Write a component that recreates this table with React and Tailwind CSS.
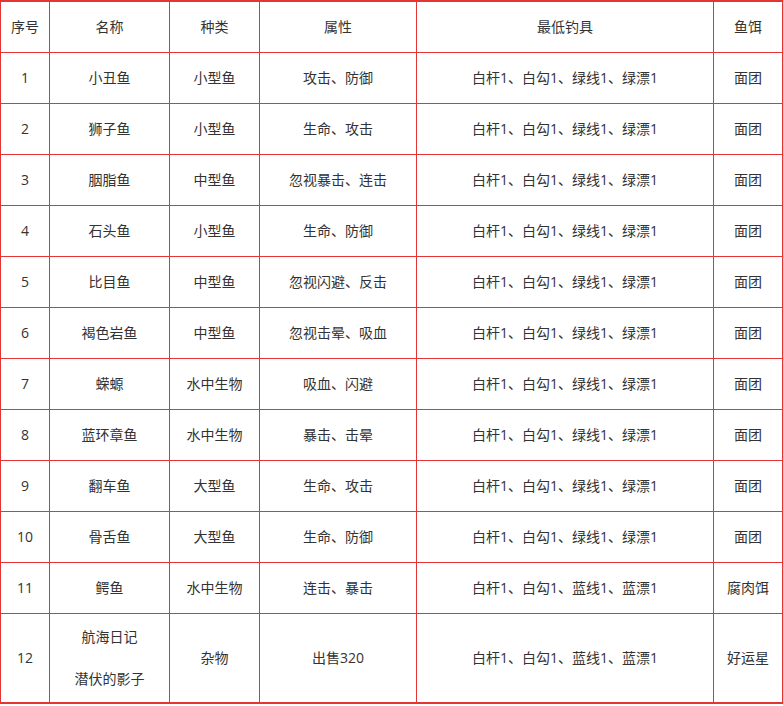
import React from "react";

const ROWS = [
  ["1", "小丑鱼", "小型鱼", "攻击、防御", "白杆1、白勾1、绿线1、绿漂1", "面团"],
  ["2", "狮子鱼", "小型鱼", "生命、攻击", "白杆1、白勾1、绿线1、绿漂1", "面团"],
  ["3", "胭脂鱼", "中型鱼", "忽视暴击、连击", "白杆1、白勾1、绿线1、绿漂1", "面团"],
  ["4", "石头鱼", "小型鱼", "生命、防御", "白杆1、白勾1、绿线1、绿漂1", "面团"],
  ["5", "比目鱼", "中型鱼", "忽视闪避、反击", "白杆1、白勾1、绿线1、绿漂1", "面团"],
  ["6", "褐色岩鱼", "中型鱼", "忽视击晕、吸血", "白杆1、白勾1、绿线1、绿漂1", "面团"],
  ["7", "蝾螈", "水中生物", "吸血、闪避", "白杆1、白勾1、绿线1、绿漂1", "面团"],
  ["8", "蓝环章鱼", "水中生物", "暴击、击晕", "白杆1、白勾1、绿线1、绿漂1", "面团"],
  ["9", "翻车鱼", "大型鱼", "生命、攻击", "白杆1、白勾1、绿线1、绿漂1", "面团"],
  ["10", "骨舌鱼", "大型鱼", "生命、防御", "白杆1、白勾1、绿线1、绿漂1", "面团"],
  ["11", "鳄鱼", "水中生物", "连击、暴击", "白杆1、白勾1、蓝线1、蓝漂1", "腐肉饵"],
];

const HEAD = ["序号", "名称", "种类", "属性", "最低钓具", "鱼饵"];

const cell = "border border-[#e33535] text-center align-middle p-0";

export default function App() {
  return (
    <div
      className="bg-white text-[14px] text-[#333]"
      style={{ fontFamily: '"Open Sans", "Noto Sans CJK SC", sans-serif' }}
    >
      <table className="w-[782px] table-fixed border-collapse border-t-2 border-b-2 border-[#e33535]">
        <colgroup>
          <col className="w-[49px]" />
          <col className="w-[120px]" />
          <col className="w-[90px]" />
          <col className="w-[157px]" />
          <col className="w-[297px]" />
          <col className="w-[69px]" />
        </colgroup>
        <thead>
          <tr className="h-[51px]">
            {HEAD.map((h) => (
              <th key={h} className={cell + " font-normal"}>
                {h}
              </th>
            ))}
          </tr>
        </thead>
        <tbody>
          {ROWS.map((r) => (
            <tr key={r[0]} className="h-[51px]">
              {r.map((c, i) => (
                <td key={i} className={cell}>
                  {c}
                </td>
              ))}
            </tr>
          ))}
          <tr className="h-[90px]">
            <td className={cell}>12</td>
            <td className={cell}>
              <div className="leading-[42px]">航海日记</div>
              <div className="leading-[42px]">潜伏的影子</div>
            </td>
            <td className={cell}>杂物</td>
            <td className={cell}>出售320</td>
            <td className={cell}>白杆1、白勾1、蓝线1、蓝漂1</td>
            <td className={cell}>好运星</td>
          </tr>
        </tbody>
      </table>
    </div>
  );
}
